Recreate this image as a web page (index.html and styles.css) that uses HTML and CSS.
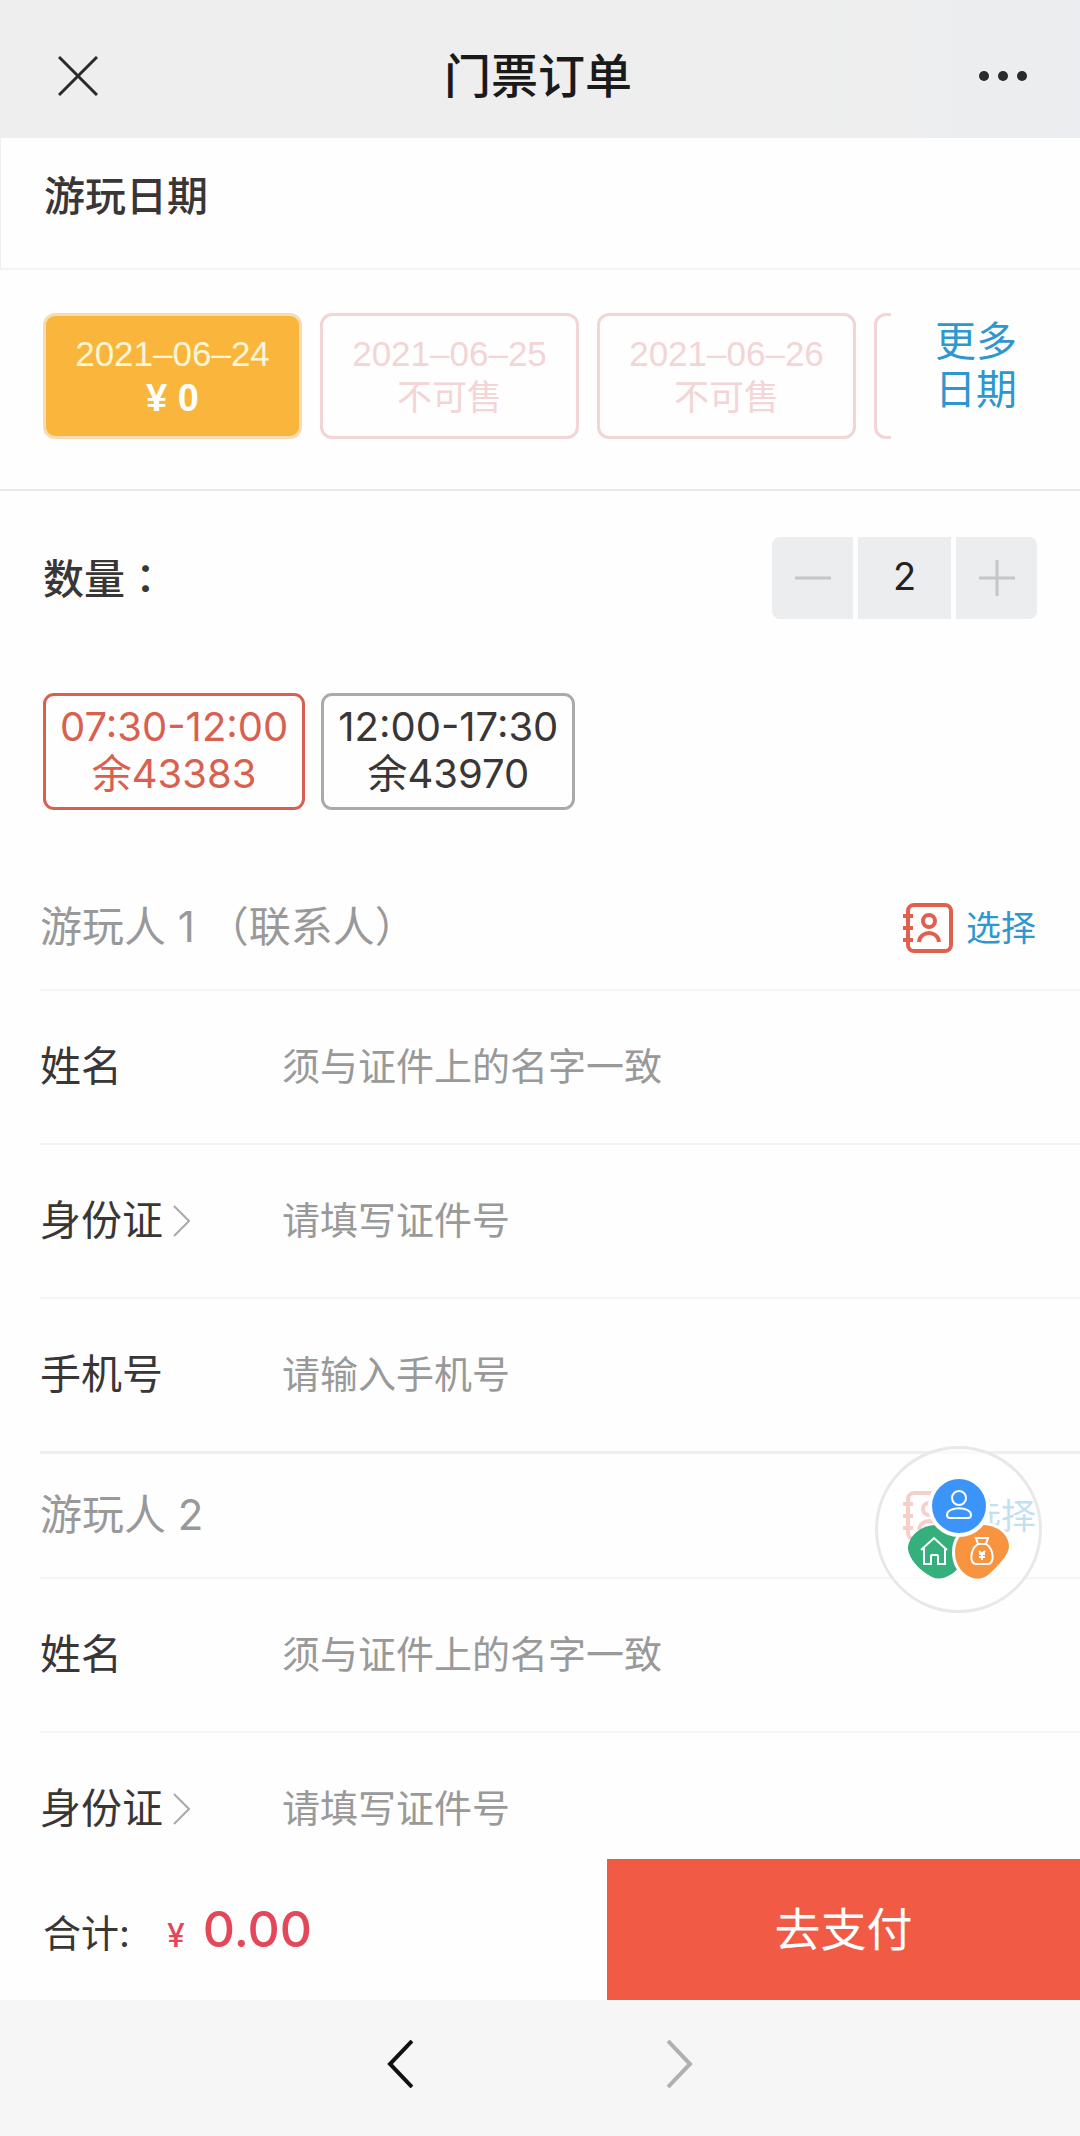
FILE: index.html
```html
<!DOCTYPE html>
<html lang="zh-CN">
<head>
  <meta charset="UTF-8">
  <meta name="viewport" content="width=device-width, initial-scale=1">
  <title>门票订单</title>
  <link rel="stylesheet" href="styles.css">
</head>
<body>
  <header class="topbar">
    <button class="icon-btn" aria-label="关闭">
      <svg width="40" height="40" viewBox="0 0 40 40"><path d="M1 1 39 39M39 1 1 39" stroke="#2a2a2a" stroke-width="3"/></svg>
    </button>
    <h1>门票订单</h1>
    <button class="icon-btn" aria-label="更多">
      <svg width="50" height="12" viewBox="0 0 50 12" fill="#2a2a2a"><circle cx="6" cy="6" r="5"/><circle cx="25" cy="6" r="5"/><circle cx="44" cy="6" r="5"/></svg>
    </button>
  </header>

  <main>
    <h2 class="section-title">游玩日期</h2>

    <div class="dates">
      <div class="date-list">
        <button class="date active"><span>2021–06–24</span><b>¥ 0</b></button>
        <button class="date" disabled><span>2021–06–25</span><span>不可售</span></button>
        <button class="date" disabled><span>2021–06–26</span><span>不可售</span></button>
        <button class="date" disabled></button>
      </div>
      <a class="more" href="#">更多<br>日期</a>
    </div>

    <div class="quantity">
      <label for="num">数量<span class="colon" lang="zh-TW">：</span></label>
      <div class="stepper">
        <button aria-label="减少"><svg width="36" height="36" viewBox="0 0 36 36"><path d="M0 18H36" stroke="#c4c6c7" stroke-width="3"/></svg></button>
        <input id="num" value="2">
        <button aria-label="增加"><svg width="36" height="36" viewBox="0 0 36 36"><path d="M0 18H36M18 0V36" stroke="#c4c6c7" stroke-width="3"/></svg></button>
      </div>
    </div>

    <div class="slots">
      <button class="slot active">07:30-12:00<br>余43383</button>
      <button class="slot">12:00-17:30<br>余43970</button>
    </div>

    <section class="player">
      <div class="player-head">
        <h3>游玩人 1 （联系人）</h3>
        <a class="choose" href="#">
          <svg width="50" height="50" viewBox="0 0 50 50" fill="none" stroke="#e0604f" stroke-width="4"><rect x="5" y="2" width="43" height="46" rx="6"/><path d="M0 13H10M0 25H10M0 37H10"/><circle cx="26" cy="18" r="6"/><path d="M16 39C17 27 35 27 36 39"/></svg>
          选择
        </a>
      </div>
      <div class="row"><label for="name1">姓名</label><input id="name1" placeholder="须与证件上的名字一致"></div>
      <div class="row"><label for="card1">身份证<svg width="17" height="32" viewBox="0 0 17 32"><path d="M1 1 16 16 1 31" fill="none" stroke="#aaa" stroke-width="2"/></svg></label><input id="card1" placeholder="请填写证件号"></div>
      <div class="row"><label for="phone1">手机号</label><input id="phone1" type="tel" placeholder="请输入手机号"></div>
    </section>

    <section class="player">
      <div class="player-head">
        <h3>游玩人 2</h3>
        <a class="choose" href="#">
          <svg width="50" height="50" viewBox="0 0 50 50" fill="none" stroke="#e0604f" stroke-width="4"><rect x="5" y="2" width="43" height="46" rx="6"/><path d="M0 13H10M0 25H10M0 37H10"/><circle cx="26" cy="18" r="6"/><path d="M16 39C17 27 35 27 36 39"/></svg>
          选择
        </a>
      </div>
      <div class="row"><label for="name2">姓名</label><input id="name2" placeholder="须与证件上的名字一致"></div>
      <div class="row"><label for="card2">身份证<svg width="17" height="32" viewBox="0 0 17 32"><path d="M1 1 16 16 1 31" fill="none" stroke="#aaa" stroke-width="2"/></svg></label><input id="card2" placeholder="请填写证件号"></div>
    </section>
  </main>

  <button class="float-menu" aria-label="快捷菜单">
    <svg width="102" height="102" viewBox="0 0 102 102">
      <path d="M28 46C12 46 0 58 0 70C1 80 12 92 24 98Q32 102 42 96C50 92 54 84 54 74C54 56 42 46 28 46Z" fill="#35b07c"/>
      <path d="M74 46C90 46 101 56 101 68Q100 78 80 96Q70 103 60 97C52 92 47 84 47 73C47 57 60 46 74 46Z" fill="#fff" stroke="#fff" stroke-width="6"/>
      <path d="M74 46C90 46 101 56 101 68Q100 78 80 96Q70 103 60 97C52 92 47 84 47 73C47 57 60 46 74 46Z" fill="#f8943f"/>
      <circle cx="51" cy="27" r="31" fill="#fff"/>
      <circle cx="51" cy="27" r="27" fill="#3b94fa"/>
      <g fill="none" stroke="#fff" stroke-width="2">
        <circle cx="51" cy="19" r="7"/>
        <path d="M39 36C39 27 63 27 63 36Q63 39 60 39H42Q39 39 39 36Z"/>
        <path d="M13 71 26 59 39 71M16 69V85H23V77Q23 76 24 76H29Q30 76 30 77V85H37V69"/>
        <path d="M68 59H80L78 65H70ZM70 65C62 70 61 85 68 85H80C87 85 86 70 78 65"/>
        <path d="M71 72 74 75 77 72M74 75V81M71 75H77M71 78H77"/>
      </g>
    </svg>
  </button>

  <footer>
    <div class="paybar">
      <div class="total">合计: <span class="yen">¥</span><span class="price">0.00</span></div>
      <button class="pay">去支付</button>
    </div>
    <nav class="browser-nav">
      <button class="icon-btn" aria-label="后退"><svg width="26" height="48" viewBox="0 0 26 48"><path d="M25 1 3 24 25 47" fill="none" stroke="#111" stroke-width="4"/></svg></button>
      <button class="icon-btn" aria-label="前进"><svg width="26" height="48" viewBox="0 0 26 48"><path d="M1 1 23 24 1 47" fill="none" stroke="#b0b0b0" stroke-width="4"/></svg></button>
    </nav>
  </footer>
</body>
</html>
```

FILE: styles.css
```css
* {
  box-sizing: border-box;
}
body {
  margin: 0;
  height: 100vh;
  display: flex;
  flex-direction: column;
  position: relative;
  overflow: hidden;
  background: #fefefe;
  color: #3a3636;
  font-family: Inter, "Noto Sans CJK SC", sans-serif;
  font-size: 41px;
  line-height: 1.2;
}
button, input {
  border: 0;
  padding: 0;
  margin: 0;
  background: none;
  color: inherit;
  font: inherit;
}
h1, h2, h3 {
  margin: 0;
  font-weight: 400;
}
a {
  color: #2f97cf;
  text-decoration: none;
}
svg {
  display: block;
  flex: none;
}

.topbar {
  flex: none;
  display: flex;
  align-items: center;
  justify-content: space-between;
  height: 138px;
  padding: 14px 52px 0 58px;
  background: linear-gradient(90deg, #eee 75%, #ebedf0);
}
.topbar h1 {
  font-size: 47px;
  font-weight: 500;
  color: #1a1a1a;
}

main {
  flex: 1;
  min-height: 0;
  overflow: hidden;
}
.section-title {
  height: 132px;
  padding: 28px 43px 0;
  border-bottom: 2px solid #f4f4f4;
  border-left: 1px solid #eee;
  line-height: 60px;
  font-size: 41px;
  font-weight: 500;
}

.dates {
  display: flex;
  height: 221px;
  padding: 43px 43px 0;
  border-bottom: 2px solid #e9e9e9;
}
.date-list {
  flex: 1;
  display: flex;
  gap: 18px;
  overflow: hidden;
}
.date {
  flex: none;
  display: flex;
  flex-direction: column;
  align-items: center;
  justify-content: center;
  width: 259px;
  height: 126px;
  border: 3px solid #f2d5d4;
  border-radius: 12px;
  color: #f2d5d4;
  font-family: "Liberation Sans", "Noto Sans CJK SC", sans-serif;
  font-size: 35px;
  line-height: 44px;
}
.date.active {
  background: #fab53d;
  border-color: #f5dcb4;
  color: #fff6d6;
}
.date b {
  color: #fff;
  font-size: 38px;
  font-weight: 700;
}
.more {
  width: 146px;
  padding: 4px 0 0 24px;
  text-align: center;
  line-height: 48px;
}

.quantity {
  display: flex;
  align-items: center;
  justify-content: space-between;
  padding: 46px 43px 0;
}
.quantity label {
  font-weight: 500;
}
.colon {
  font-family: "Noto Sans CJK TC", sans-serif;
}
.stepper {
  display: flex;
  gap: 5px;
  border-radius: 8px;
  overflow: hidden;
}
.stepper button, .stepper input {
  display: flex;
  align-items: center;
  justify-content: center;
  width: 81px;
  height: 82px;
  background: #ebedee;
}
.stepper input {
  width: 93px;
  padding-bottom: 4px;
  text-align: center;
  font-size: 38px;
  color: #222;
}

.slots {
  display: flex;
  gap: 16px;
  padding: 74px 43px 56px;
}
.slot {
  padding: 0 14px 4px;
  height: 117px;
  border: 3px solid #aaa;
  border-radius: 11px;
  font-size: 40px;
  line-height: 47px;
}
.slot.active {
  border-color: #d9604f;
  color: #d9604f;
}

.player {
  padding-left: 40px;
}
.player-head {
  display: flex;
  align-items: center;
  justify-content: space-between;
  height: 125px;
  padding-right: 44px;
  border-bottom: 2px solid #f5f5f5;
}
.player-head h3 {
  font-size: 42px;
  color: #999;
}
.choose {
  display: flex;
  align-items: center;
  gap: 13px;
  font-size: 35px;
}
.row {
  display: flex;
  align-items: center;
  height: 154px;
  border-bottom: 2px solid #f5f5f5;
}
.row:last-child {
  height: 155px;
  border-bottom: 3px solid #efefeb;
}
.row label {
  display: flex;
  align-items: center;
  gap: 10px;
  width: 242px;
}
.row input {
  flex: 1;
  min-width: 0;
  font-size: 38px;
}
.row input::placeholder {
  color: #999;
  opacity: 1;
}

.float-menu {
  position: absolute;
  right: 38px;
  bottom: 523px;
  display: flex;
  align-items: center;
  justify-content: center;
  width: 167px;
  height: 167px;
  border: 3px solid #e8e8e8;
  border-radius: 50%;
  background: rgba(255, 255, 255, 0.7);
}

footer {
  flex: none;
}
.paybar {
  display: flex;
  height: 141px;
  background: #fefefe;
}
.total {
  flex: 1;
  display: flex;
  align-items: baseline;
  padding: 40px 0 0 43px;
  font-size: 38px;
}
.yen {
  margin: 0 18px 0 37px;
  font-size: 32px;
  font-weight: 500;
  color: #e2475a;
}
.price {
  font-size: 50px;
  font-weight: 500;
  color: #e2475a;
}
.pay {
  width: 473px;
  background: #f15a45;
  color: #fff;
  font-size: 46px;
}
.browser-nav {
  display: flex;
  justify-content: center;
  gap: 254px;
  height: 136px;
  padding-bottom: 8px;
  background: #f6f6f6;
}
```
